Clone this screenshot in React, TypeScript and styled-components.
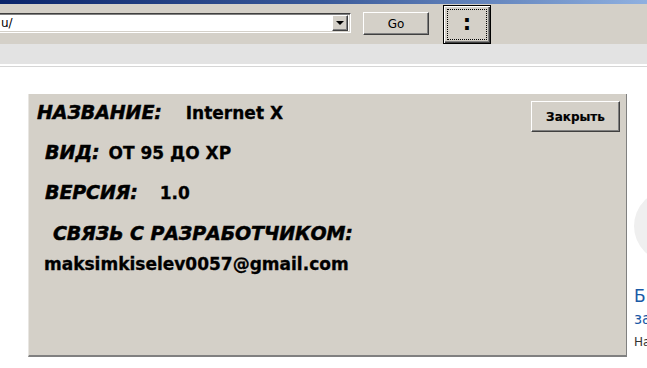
import React from "react";
import styled, { createGlobalStyle } from "styled-components";

const Global = createGlobalStyle`
  html, body {
    margin: 0;
    padding: 0;
    width: 647px;
    height: 368px;
    overflow: hidden;
    background: #ffffff;
  }
  * { box-sizing: border-box; }
`;

const Page = styled.div`
  width: 647px;
  height: 368px;
  overflow: hidden;
  display: flex;
  flex-direction: column;
  font-family: "DejaVu Sans", Verdana, sans-serif;
  color: #000;
`;

const TitleStrip = styled.div`
  height: 4px;
  flex: none;
  background: linear-gradient(to right, #0a246a 0%, #3a5a9a 50%, #8fb0e0 100%);
`;

const Toolbar = styled.div`
  height: 40px;
  flex: none;
  background: #d4d0c8;
  display: flex;
  align-items: flex-start;
`;

const Combo = styled.div`
  margin-top: 9px;
  width: 351px;
  height: 20px;
  display: flex;
  align-items: stretch;
  background: #fff;
  border-top: 1px solid #404040;
  border-bottom: 1px solid #ffffff;
  border-right: 1px solid #ffffff;
  box-shadow: inset 0 1px 0 #808080, inset -1px 0 0 #d4d0c8, inset 0 -1px 0 #d4d0c8;
`;

const ComboText = styled.div`
  flex: 1;
  padding-left: 1px;
  display: flex;
  align-items: center;
  font-family: Tahoma, "DejaVu Sans", sans-serif;
  font-size: 12px;
  color: #000;
`;

const DropButton = styled.div`
  width: 16px;
  margin: 1px 2px 1px 0;
  background: #d4d0c8;
  border-top: 1px solid #fff;
  border-left: 1px solid #fff;
  border-right: 1px solid #404040;
  border-bottom: 1px solid #404040;
  box-shadow: inset -1px -1px 0 #808080;
  display: flex;
  align-items: center;
  justify-content: center;
`;

const Arrow = styled.div`
  width: 0;
  height: 0;
  border-left: 4px solid transparent;
  border-right: 4px solid transparent;
  border-top: 4px solid #000;
`;

const ClassicButton = styled.div<{ $w: number; $h: number; $ml: number; $mt: number }>`
  width: ${(p) => p.$w}px;
  height: ${(p) => p.$h}px;
  margin-left: ${(p) => p.$ml}px;
  margin-top: ${(p) => p.$mt}px;
  flex: none;
  background: #d4d0c8;
  border-top: 1px solid #ffffff;
  border-left: 1px solid #ffffff;
  border-right: 1px solid #404040;
  border-bottom: 1px solid #404040;
  box-shadow: inset -1px -1px 0 #808080;
  display: flex;
  align-items: center;
  justify-content: center;
  font-family: Tahoma, "DejaVu Sans", sans-serif;
  font-size: 12px;
  color: #000;
`;

const FocusButton = styled.div`
  width: 48px;
  height: 39px;
  margin-left: 14px;
  margin-top: 1px;
  flex: none;
  border: 1px solid #000;
  background: #d4d0c8;
  box-shadow: inset 1px 1px 0 #ffffff, inset -1px -1px 0 #404040, inset -2px -2px 0 #808080;
  padding: 3px;
  display: flex;
`;

const FocusRect = styled.div`
  flex: 1;
  border: 1px dotted #000;
  display: flex;
  align-items: center;
  justify-content: center;
  font-family: "DejaVu Sans", Verdana, sans-serif;
  font-weight: bold;
  font-size: 21px;
  line-height: 1;
  padding-bottom: 2px;
`;

const Band = styled.div`
  height: 20px;
  flex: none;
  background: #e3e3e3;
`;

const BandEdge = styled.div`
  height: 3px;
  flex: none;
  border-top: 1px solid #ffffff;
  border-bottom: 1px solid #d6d6d6;
`;

const Content = styled.div`
  flex: 1;
  display: flex;
  align-items: flex-start;
  padding-top: 27px;
  padding-left: 28px;
`;

const Panel = styled.div`
  width: 599px;
  height: 263px;
  flex: none;
  background: #d4d0c8;
  border-right: 1px solid #808080;
  border-bottom: 2px solid #808080;
  border-left: 1px solid #e8e6e2;
  position: relative;
  display: flex;
  flex-direction: column;
`;

const Row = styled.div<{ $pl: number; $h: number }>`
  display: flex;
  align-items: baseline;
  padding-left: ${(p) => p.$pl}px;
  height: ${(p) => p.$h}px;
  flex: none;
`;

const Label = styled.span`
  font-family: "DejaVu Sans", Verdana, sans-serif;
  font-weight: bold;
  font-style: italic;
  font-size: 19px;
  letter-spacing: -0.1px;
  -webkit-text-stroke: 0.5px #000;
  color: #000;
  white-space: nowrap;
`;

const Value = styled.span<{ $gap: number }>`
  font-family: "DejaVu Sans", Verdana, sans-serif;
  font-weight: bold;
  font-size: 17px;
  -webkit-text-stroke: 0.3px #000;
  color: #000;
  margin-left: ${(p) => p.$gap}px;
  white-space: nowrap;
`;

const Fields = styled.div`
  display: flex;
  flex-direction: column;
  padding-top: 7px;
`;

const CloseButton = styled.div`
  position: absolute;
  top: 7px;
  right: 6px;
  width: 89px;
  height: 31px;
  background: #d4d0c8;
  border-top: 1px solid #ffffff;
  border-left: 1px solid #ffffff;
  border-right: 1px solid #404040;
  border-bottom: 1px solid #404040;
  box-shadow: inset -1px -1px 0 #808080;
  display: flex;
  align-items: center;
  justify-content: center;
  font-family: "DejaVu Sans", Verdana, sans-serif;
  font-weight: bold;
  font-size: 12px;
  -webkit-text-stroke: 0.2px #000;
  color: #000;
`;

const Side = styled.div`
  margin-left: 7px;
  padding-top: 96px;
  display: flex;
  flex-direction: column;
  flex: none;
  width: 120px;
`;

const Avatar = styled.div`
  width: 72px;
  height: 72px;
  border-radius: 50%;
  background: #efefef;
  flex: none;
`;

const SideTitle = styled.div<{ $size: number; $mt: number }>`
  font-family: "DejaVu Sans", Arial, sans-serif;
  font-size: ${(p) => p.$size}px;
  color: #1a5aa6;
  margin-top: ${(p) => p.$mt}px;
  line-height: 1;
  white-space: nowrap;
`;

const SideText = styled.div`
  font-family: "DejaVu Sans", Arial, sans-serif;
  font-size: 12px;
  color: #333;
  margin-top: 9px;
  line-height: 1;
  white-space: nowrap;
`;

export default function App() {
  return (
    <>
      <Global />
      <Page>
        <TitleStrip />
        <Toolbar>
          <Combo>
            <ComboText>u/</ComboText>
            <DropButton>
              <Arrow />
            </DropButton>
          </Combo>
          <ClassicButton $w={66} $h={23} $ml={12} $mt={8}>
            Go
          </ClassicButton>
          <FocusButton>
            <FocusRect>:</FocusRect>
          </FocusButton>
        </Toolbar>
        <Band />
        <BandEdge />
        <Content>
          <Panel>
            <Fields>
              <Row $pl={8} $h={40}>
                <Label>НАЗВАНИЕ:</Label>
                <Value $gap={24}>Internet X</Value>
              </Row>
              <Row $pl={16} $h={40}>
                <Label>ВИД:</Label>
                <Value $gap={9}>ОТ 95 ДО ХР</Value>
              </Row>
              <Row $pl={16} $h={41}>
                <Label>ВЕРСИЯ:</Label>
                <Value $gap={22}>1.0</Value>
              </Row>
              <Row $pl={24} $h={32}>
                <Label>СВЯЗЬ С РАЗРАБОТЧИКОМ:</Label>
              </Row>
              <Row $pl={15} $h={30}>
                <Value $gap={0}>maksimkiselev0057@gmail.com</Value>
              </Row>
            </Fields>
            <CloseButton>Закрыть</CloseButton>
          </Panel>
          <Side>
            <Avatar />
            <SideTitle $size={17} $mt={26}>Б</SideTitle>
            <SideTitle $size={15} $mt={7}>за</SideTitle>
            <SideText>На</SideText>
          </Side>
        </Content>
      </Page>
    </>
  );
}
